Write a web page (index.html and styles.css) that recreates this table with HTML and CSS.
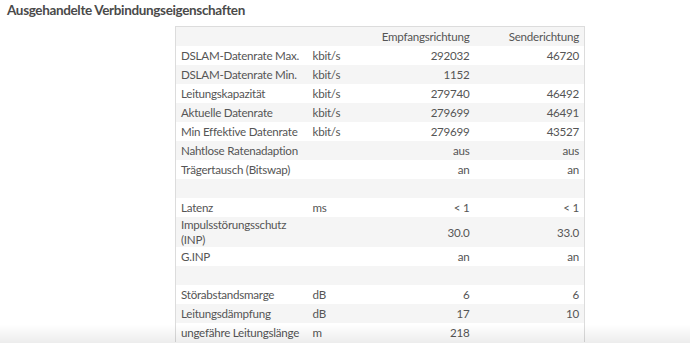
FILE: index.html
```html
<!DOCTYPE html>
<html lang="de">
<head>
<meta charset="utf-8">
<title>Ausgehandelte Verbindungseigenschaften</title>
<link rel="stylesheet" href="styles.css">
</head>
<body>
<h2 class="title">Ausgehandelte Verbindungseigenschaften</h2>
<div class="wrap">
<table class="props">
<colgroup><col class="c-label"><col class="c-unit"><col class="c-ds"><col class="c-us"></colgroup>
<thead>
<tr><th></th><th></th><th class="num">Empfangsrichtung</th><th class="num">Senderichtung</th></tr>
</thead>
<tbody>
<tr><td>DSLAM-Datenrate Max.</td><td>kbit/s</td><td class="num">292032</td><td class="num">46720</td></tr>
<tr><td>DSLAM-Datenrate Min.</td><td>kbit/s</td><td class="num">1152</td><td class="num"></td></tr>
<tr><td>Leitungskapazität</td><td>kbit/s</td><td class="num">279740</td><td class="num">46492</td></tr>
<tr><td>Aktuelle Datenrate</td><td>kbit/s</td><td class="num">279699</td><td class="num">46491</td></tr>
<tr><td>Min Effektive Datenrate</td><td>kbit/s</td><td class="num">279699</td><td class="num">43527</td></tr>
<tr><td>Nahtlose Ratenadaption</td><td></td><td class="num">aus</td><td class="num">aus</td></tr>
<tr><td>Trägertausch (Bitswap)</td><td></td><td class="num">an</td><td class="num">an</td></tr>
<tr class="empty"><td></td><td></td><td></td><td></td></tr>
<tr><td>Latenz</td><td>ms</td><td class="num">&lt; 1</td><td class="num">&lt; 1</td></tr>
<tr><td class="wrapcell">Impulsstörungsschutz<br>(INP)</td><td></td><td class="num">30.0</td><td class="num">33.0</td></tr>
<tr><td>G.INP</td><td></td><td class="num">an</td><td class="num">an</td></tr>
<tr class="empty"><td></td><td></td><td></td><td></td></tr>
<tr><td>Störabstandsmarge</td><td>dB</td><td class="num">6</td><td class="num">6</td></tr>
<tr><td>Leitungsdämpfung</td><td>dB</td><td class="num">17</td><td class="num">10</td></tr>
<tr><td>ungefähre Leitungslänge</td><td>m</td><td class="num">218</td><td class="num"></td></tr>
</tbody>
</table>
</div>
<div class="fade"></div>
</body>
</html>
```
FILE: styles.css
```css
html, body {
  margin: 0;
  padding: 0;
  background: #fff;
}
body {
  font-family: Lato, "Noto Sans", sans-serif;
  color: #555;
  overflow: hidden;
  height: 343px;
}
.title {
  margin: 0;
  padding: 2px 0 0 7px;
  font-size: 13.5px;
  line-height: 17px;
  font-weight: 700;
  letter-spacing: -0.35px;
  color: #4a4a4a;
}
.wrap {
  padding: 7px 0 0 175px;
}
.props {
  border-collapse: collapse;
  table-layout: fixed;
  width: 410px;
  font-size: 11.6px;
  letter-spacing: -0.25px;
  border: 1px solid #dcdcdc;
  border-bottom: none;
}
.c-label { width: 132px; }
.c-unit { width: 60px; }
.c-ds { width: 107px; }
.c-us { width: 110px; }
.props th {
  font-weight: 400;
  background: #f5f5f5;
}
.props th, .props td {
  height: 19px;
  padding: 1px 5px 0;
  line-height: 15px;
  text-align: left;
  vertical-align: middle;
  white-space: nowrap;
  box-sizing: border-box;
}
.props td.wrapcell {
  padding-top: 0;
}
.props tbody tr:nth-child(even) td {
  background: #f5f5f5;
}
.props .num {
  text-align: right;
}
.fade {
  position: fixed;
  left: 0;
  right: 0;
  bottom: 0;
  height: 18px;
  background: linear-gradient(to bottom, rgba(0,0,0,0), rgba(0,0,0,0.075));
  pointer-events: none;
}
```
